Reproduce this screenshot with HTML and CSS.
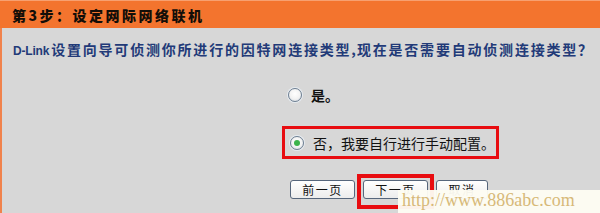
FILE: index.html
```html
<!DOCTYPE html>
<html lang="zh-CN">
<head>
<meta charset="utf-8">
<title>设定网际网络联机</title>
<link rel="stylesheet" href="styles.css">
</head>
<body>
<div class="page">
  <div class="header"><span class="title">第3步：设定网际网络联机</span></div>
  <div class="content">
    <p class="question"><span class="brand">D-Link</span>设置向导可侦测你所进行的因特网连接类型<span class="comma">,</span>现在是否需要自动侦测连接类型？</p>
    <div class="options">
      <div class="option plain"><span class="radio"></span><span class="label bold">是。</span></div>
      <div class="option highlight"><span class="radio checked"></span><span class="label">否，我要自行进行手动配置。</span></div>
    </div>
    <div class="buttons">
      <button class="btn">前一页</button>
      <span class="btn-highlight"><button class="btn">下一页</button></span>
      <button class="btn narrow">取消</button>
    </div>
    <div class="watermark">http://www.886abc.com</div>
  </div>
</div>
</body>
</html>
```

FILE: styles.css
```css
html, body {
  margin: 0;
  padding: 0;
}
body {
  width: 600px;
  height: 213px;
  overflow: hidden;
  background: #d7d7d7;
  font-family: "Noto Sans CJK SC", "Noto Sans", sans-serif;
}
.page {
  position: relative;
  width: 600px;
  height: 213px;
  display: flex;
  flex-direction: column;
}
.header {
  height: 27px;
  background: #f3742e;
  border-top: 1px solid #f7a070;
  display: flex;
  align-items: center;
  padding-left: 12px;
}
.title {
  font-size: 14px;
  font-weight: 900;
  color: #140e08;
  letter-spacing: 2.5px;
  line-height: 18px;
}
.content {
  flex: 1;
  border-left: 2px solid #f0824c;
  background: #d7d7d7;
  display: flex;
  flex-direction: column;
}
.question {
  margin: 11px 0 0 11px;
  font-size: 14px;
  line-height: 20px;
  font-weight: bold;
  color: #223a78;
  letter-spacing: 1.8px;
  white-space: nowrap;
}
.brand {
  font-family: "Liberation Sans", sans-serif;
  font-size: 12px;
  letter-spacing: -0.2px;
  margin-right: 2px;
}
.comma {
  letter-spacing: 1px;
}
.options {
  margin: 24px 0 0 280px;
  display: flex;
  flex-direction: column;
  align-items: flex-start;
  gap: 21px;
}
.option {
  display: flex;
  align-items: center;
  height: 20px;
  font-size: 14px;
  color: #111;
}
.option.plain {
  padding-left: 6px;
}
.option.highlight {
  height: 27px;
  border: 3px solid #e80c10;
  padding: 0 1px 0 5px;
}
.radio {
  width: 12px;
  height: 12px;
  border: 1px solid #6d7f93;
  border-radius: 50%;
  background: radial-gradient(circle at 50% 40%, #ffffff 0%, #f2f2f2 55%, #cfd6de 100%);
  box-shadow: 0 0 0 1px #e6ebf0;
  margin-right: 9px;
  display: flex;
  align-items: center;
  justify-content: center;
  flex: none;
}
.radio.checked::after {
  content: "";
  width: 6px;
  height: 6px;
  border-radius: 50%;
  background: #3bb34a;
}
.label {
  letter-spacing: 0;
  line-height: 20px;
}
.label.bold {
  font-weight: bold;
}
.buttons {
  margin: 15px 0 0 288px;
  display: flex;
  align-items: flex-start;
  gap: 2px;
}
.btn {
  margin-top: 6px;
  width: 65px;
  height: 19px;
  padding: 0;
  border: 1px solid #56667c;
  border-radius: 3px;
  background: linear-gradient(#ffffff, #ececec);
  font-family: "Noto Sans CJK SC", sans-serif;
  font-size: 12px;
  line-height: 16px;
  color: #111;
  letter-spacing: 1.5px;
}
.btn.narrow {
  width: 52px;
}
.btn-highlight {
  display: flex;
  border: 4px solid #e80c10;
  padding: 2px 2px 6px 2px;
}
.btn-highlight .btn {
  margin-top: 0;
}
.watermark {
  position: absolute;
  left: 398px;
  top: 190px;
  width: 198px;
  height: 23px;
  padding-left: 4px;
  background: rgba(253, 252, 242, 0.96);
  color: #d7b978;
  font-family: "Liberation Serif", serif;
  font-size: 18px;
  line-height: 21px;
}
```
